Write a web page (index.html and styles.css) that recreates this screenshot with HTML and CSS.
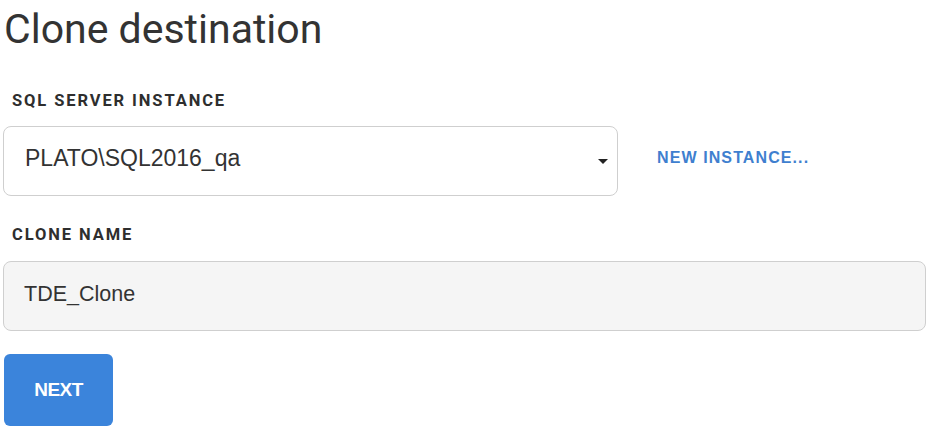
FILE: index.html
```html
<!DOCTYPE html>
<html>
<head>
<meta charset="utf-8">
<link rel="stylesheet" href="styles.css">
</head>
<body>
<div class="page">
  <h1 class="title">Clone destination</h1>
  <div class="label label-instance">SQL SERVER INSTANCE</div>
  <div class="row">
    <div class="select">
      <span class="select-text">PLATO\SQL2016_qa</span>
      <span class="caret"></span>
    </div>
    <a class="link">NEW INSTANCE...</a>
  </div>
  <div class="label label-name">CLONE NAME</div>
  <div class="input"><span class="input-text">TDE_Clone</span></div>
  <button class="btn">NEXT</button>
</div>
</body>
</html>
```
FILE: styles.css
```css
html, body {
  margin: 0;
  padding: 0;
  background: #ffffff;
}
.page {
  display: flex;
  flex-direction: column;
  align-items: flex-start;
  padding: 0 0 0 3px;
}
.title {
  margin: 4px 0 0 1px;
  font-family: Roboto, "Liberation Sans", sans-serif;
  font-weight: 400;
  font-size: 41px;
  line-height: 50px;
  color: #333333;
}
.label {
  font-family: Roboto, "Liberation Sans", sans-serif;
  font-weight: 700;
  font-size: 16.5px;
  letter-spacing: 1.9px;
  color: #2e2e2e;
  line-height: 20px;
  margin-left: 9px;
}
.label-instance {
  margin-top: 37px;
}
.label-name {
  margin-top: 29px;
}
.row {
  display: flex;
  align-items: center;
  margin-top: 15px;
}
.select {
  box-sizing: border-box;
  width: 615px;
  height: 70px;
  border: 1px solid #cfcfcf;
  border-radius: 8px;
  display: flex;
  align-items: center;
  justify-content: space-between;
  padding: 0 9px 0 21px;
  background: #ffffff;
}
.select-text {
  font-family: "Liberation Sans", Arial, sans-serif;
  font-size: 23px;
  color: #333333;
  margin-top: -6px;
}
.caret {
  width: 0;
  height: 0;
  border-left: 5px solid transparent;
  border-right: 5px solid transparent;
  border-top: 5px solid #222222;
}
.link {
  margin-left: 39px;
  margin-top: -6px;
  font-family: "Liberation Sans", Arial, sans-serif;
  font-weight: 700;
  font-size: 16px;
  letter-spacing: 1.1px;
  color: #3f7fcf;
}
.input {
  box-sizing: border-box;
  margin-top: 16px;
  width: 923px;
  height: 70px;
  border: 1px solid #cfcfcf;
  border-radius: 8px;
  background: #f5f5f5;
  display: flex;
  align-items: center;
  padding-left: 20px;
}
.input-text {
  font-family: "Liberation Sans", Arial, sans-serif;
  font-size: 21.5px;
  color: #333333;
  margin-top: -4px;
}
.btn {
  margin-top: 23px;
  margin-left: 1px;
  width: 109px;
  height: 72px;
  border: none;
  border-radius: 6px;
  background: #3b84db;
  color: #ffffff;
  font-family: "Liberation Sans", Arial, sans-serif;
  font-weight: 700;
  font-size: 19px;
  letter-spacing: -0.5px;
  padding: 0;
}
```
